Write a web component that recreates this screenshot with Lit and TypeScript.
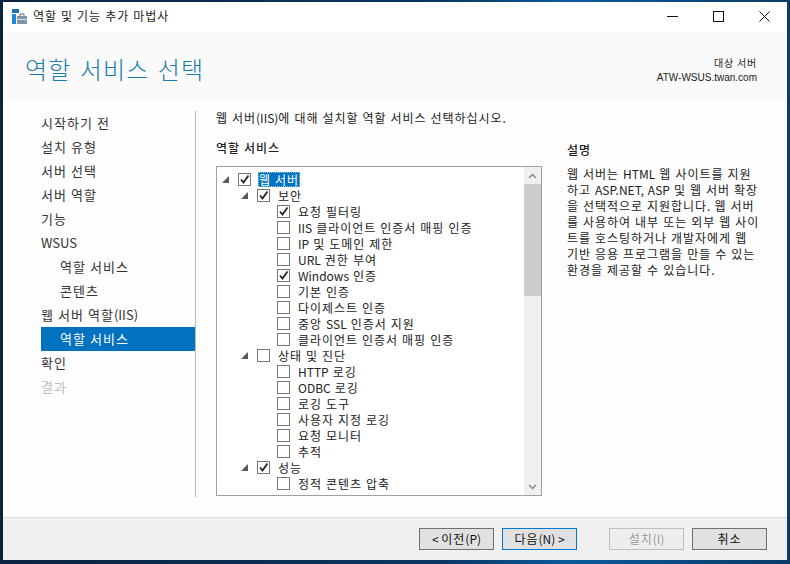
import { LitElement, html, css, nothing } from "lit";
import { customElement } from "lit/decorators.js";

type Row = { t: string; lvl: number; chk?: boolean; exp?: boolean; sel?: boolean };
const rows: Row[] = [
  { t: "웹 서버", lvl: 0, chk: true, exp: true, sel: true },
  { t: "보안", lvl: 1, chk: true, exp: true },
  { t: "요청 필터링", lvl: 2, chk: true },
  { t: "IIS 클라이언트 인증서 매핑 인증", lvl: 2 },
  { t: "IP 및 도메인 제한", lvl: 2 },
  { t: "URL 권한 부여", lvl: 2 },
  { t: "Windows 인증", lvl: 2, chk: true },
  { t: "기본 인증", lvl: 2 },
  { t: "다이제스트 인증", lvl: 2 },
  { t: "중앙 SSL 인증서 지원", lvl: 2 },
  { t: "클라이언트 인증서 매핑 인증", lvl: 2 },
  { t: "상태 및 진단", lvl: 1, exp: true },
  { t: "HTTP 로깅", lvl: 2 },
  { t: "ODBC 로깅", lvl: 2 },
  { t: "로깅 도구", lvl: 2 },
  { t: "사용자 지정 로깅", lvl: 2 },
  { t: "요청 모니터", lvl: 2 },
  { t: "추적", lvl: 2 },
  { t: "성능", lvl: 1, chk: true, exp: true },
  { t: "정적 콘텐츠 압축", lvl: 2 },
];
const nav: { t: string; sub?: boolean; sel?: boolean; dis?: boolean }[] = [
  { t: "시작하기 전" },
  { t: "설치 유형" },
  { t: "서버 선택" },
  { t: "서버 역할" },
  { t: "기능" },
  { t: "WSUS" },
  { t: "역할 서비스", sub: true },
  { t: "콘텐츠", sub: true },
  { t: "웹 서버 역할(IIS)" },
  { t: "역할 서비스", sub: true, sel: true },
  { t: "확인" },
  { t: "결과", dis: true },
];
const desc = [
  "웹 서버는 HTML 웹 사이트를 지원",
  "하고 ASP.NET, ASP 및 웹 서버 확장",
  "을 선택적으로 지원합니다. 웹 서버",
  "를 사용하여 내부 또는 외부 웹 사이",
  "트를 호스팅하거나 개발자에게 웹",
  "기반 응용 프로그램을 만들 수 있는",
  "환경을 제공할 수 있습니다.",
];

/* Hangul in the reference font is set wider than in Noto, Latin is not: space only the Hangul runs. */
const k = (t: string) =>
  t.split(/([\uac00-\ud7a3 ]+)/).map((p, i) => (i % 2 ? html`<span class="ko">${p}</span>` : p));

@customElement("app-root")
export class AppRoot extends LitElement {
  static styles = css`
    :host { display: block; width: 790px; height: 564px; overflow: hidden; background: linear-gradient(90deg, #0a2440 0%, #0a3560 55%, #0b5a9c 72%, #0a3a68 100%); font-family: "Noto Sans CJK KR", "Noto Sans", sans-serif; font-size: 12px; color: #1e1e1e; padding-top: 2px; box-sizing: border-box; }
    .ko { letter-spacing: 0.96px; word-spacing: 0.4px; }
    .win { margin-left: 3px; width: 784px; height: 558px; display: flex; flex-direction: column; background: #fdfdfd; }
    .title { height: 30px; flex: none; background: #fff; display: flex; align-items: flex-start; }
    .title svg.app { margin: 7px 0 0 9px; flex: none; }
    .title .txt { margin: 6px 0 0 6px; flex: 1; color: #222; line-height: 16px; }
    .caps { display: flex; height: 28px; }
    .cap { width: 46px; display: flex; align-items: center; justify-content: center; }
    .head { height: 68px; flex: none; display: flex; justify-content: space-between; padding: 0 30px 0 22px; background: #fafafa; }
    h1 { margin: 17px 0 0; font-weight: 300; font-size: 24px; line-height: 40px; color: #1a7bad; letter-spacing: 1.25px; word-spacing: 1.5px; }
    .target { margin-top: 23px; text-align: right; font-size: 10px; line-height: 15px; color: #222; }
    .target .tl { letter-spacing: 0.8px; }
    .target .host { font-family: "Liberation Sans", sans-serif; font-size: 10px; }
    .body { flex: 1; display: flex; min-height: 0; background: #fdfdfd; }
    .nav { width: 193px; flex: none; height: 386px; margin-top: 11px; border-right: 1px solid #bcbcbc; box-sizing: border-box; }
    .ni { height: 24px; margin-left: 38px; line-height: 24px; font-size: 13px; color: #333; }
    .ni .ko { letter-spacing: 1.04px; word-spacing: 0; }
    .ni.sub { padding-left: 19px; }
    .ni.sel { background: #0072c0; color: #fff; }
    .ni.dis { color: #bdbdbd; }
    .main { flex: 1; padding: 9px 0 0 20px; min-width: 0; }
    .intro { line-height: 18px; font-size: 12px; color: #222; height: 28px; white-space: nowrap; }
    .cols { display: flex; }
    .left { width: 326px; flex: none; }
    .sh { font-weight: 500; line-height: 18px; font-size: 12px; color: #222; margin-top: 2px; }
    .tree { margin-top: 9px; width: 326px; height: 330px; box-sizing: border-box; border: 1px solid #a0a0a0; background: #fff; display: flex; overflow: hidden; }
    .list { flex: 1; padding-top: 4px; overflow: hidden; }
    .row { height: 16px; display: flex; align-items: center; white-space: nowrap; color: #222; }
    .arrow { width: 7px; height: 16px; flex: none; display: flex; align-items: center; margin-right: 9px; }
    .box { width: 13px; height: 13px; flex: none; border: 1px solid #767676; box-sizing: border-box; background: #fff; display: flex; align-items: center; justify-content: center; margin-right: 8px; }
    .lbl { line-height: 15px; padding: 0 1px; margin-left: -1px; font-size: 12px; }
    .lbl.sel { background: #0072c0; color: #fff; outline: 1px dotted #9cc; outline-offset: -1px; }
    .lv0 { padding-left: 5px; }
    .lv1 { padding-left: 24px; }
    .lv2 { padding-left: 60px; }
    .sb { width: 17px; flex: none; background: #f0f0f0; display: flex; flex-direction: column; }
    .sb .btn { height: 17px; display: flex; align-items: center; justify-content: center; flex: none; }
    .sb .thumb { height: 112px; background: #cdcdcd; flex: none; }
    .sb .rest { flex: 1; }
    .desc { margin-left: 25px; width: 215px; margin-top: 2px; }
    .desc .d { margin-top: 7px; line-height: 16px; font-size: 12px; color: #222; white-space: nowrap; }
    .foot { height: 42px; flex: none; background: #f0f0f0; border-top: 1px solid #dfdfdf; display: flex; align-items: center; padding-left: 416px; }
    button { width: 75px; height: 22px; padding: 0; box-sizing: border-box; border: 1px solid #707070; background: #e1e1e1; font: inherit; font-size: 12px; color: #111; line-height: 18px; white-space: nowrap; }
    button.def { border-color: #0078d7; margin-left: 8px; }
    button.off { border-color: #bfbfbf; background: #eee; color: #9a9a9a; margin-left: 32px; }
    button.can { margin-left: 8px; }
  `;

  private row(r: Row) {
    return html`<div class="row lv${r.lvl}">
      ${r.exp
        ? html`<span class="arrow"><svg width="7" height="7" viewBox="0 0 7 7"><path d="M0 7H7V0Z" fill="#595959"/></svg></span>`
        : nothing}
      <span class="box">${r.chk
        ? html`<svg width="11" height="11" viewBox="0 0 11 11"><path d="M2 5.5L4.5 8.5L9.5 1.5" fill="none" stroke="#222" stroke-width="1.8"/></svg>`
        : nothing}</span>
      <span class="lbl ${r.sel ? "sel" : ""}">${k(r.t)}</span>
    </div>`;
  }

  render() {
    return html`<div class="win">
      <div class="title">
        <svg class="app" width="15" height="15" viewBox="0 0 15 15"><path d="M0 0H7V4H0Z" fill="#1a6fb5"/><path d="M0 5H4V15H0Z" fill="#1e88d8"/><path d="M5 7H15V15H5Z" fill="#7f95a5"/><path d="M8 7V5H12V7" fill="none" stroke="#5a6c7a"/><path d="M5 10.5H15" stroke="#dfe6ea"/></svg>
        <span class="txt">${k("역할 및 기능 추가 마법사")}</span>
        <div class="caps">
          <span class="cap"><svg width="11" height="11" viewBox="0 0 11 11"><path d="M0 5.5H11" stroke="#111"/></svg></span>
          <span class="cap"><svg width="11" height="11" viewBox="0 0 11 11"><rect x=".5" y=".5" width="10" height="10" fill="none" stroke="#111"/></svg></span>
          <span class="cap"><svg width="11" height="11" viewBox="0 0 11 11"><path d="M.5 .5L10.5 10.5M10.5 .5L.5 10.5" stroke="#111"/></svg></span>
        </div>
      </div>
      <div class="head">
        <h1>역할 서비스 선택</h1>
        <div class="target"><div class="tl">대상 서버</div><div class="host">ATW-WSUS.twan.com</div></div>
      </div>
      <div class="body">
        <div class="nav">
          ${nav.map((n) => html`<div class="ni ${n.sub ? "sub" : ""} ${n.sel ? "sel" : ""} ${n.dis ? "dis" : ""}">${k(n.t)}</div>`)}
        </div>
        <div class="main">
          <div class="intro">${k("웹 서버(IIS)에 대해 설치할 역할 서비스 선택하십시오.")}</div>
          <div class="cols">
            <div class="left">
              <div class="sh">${k("역할 서비스")}</div>
              <div class="tree">
                <div class="list">${rows.map((r) => this.row(r))}</div>
                <div class="sb">
                  <div class="btn"><svg width="9" height="6" viewBox="0 0 9 6"><path d="M1 5L4.5 1.5L8 5" fill="none" stroke="#8a8a8a" stroke-width="1.5"/></svg></div>
                  <div class="thumb"></div>
                  <div class="rest"></div>
                  <div class="btn"><svg width="9" height="6" viewBox="0 0 9 6"><path d="M1 1L4.5 4.5L8 1" fill="none" stroke="#8a8a8a" stroke-width="1.5"/></svg></div>
                </div>
              </div>
            </div>
            <div class="desc">
              <div class="sh">${k("설명")}</div>
              <div class="d">${desc.map((l) => html`<div>${k(l)}</div>`)}</div>
            </div>
          </div>
        </div>
      </div>
      <div class="foot">
        <button>&lt; ${k("이전")}(P)</button>
        <button class="def">${k("다음")}(N) &gt;</button>
        <button class="off">${k("설치")}(I)</button>
        <button class="can">${k("취소")}</button>
      </div>
    </div>`;
  }
}
